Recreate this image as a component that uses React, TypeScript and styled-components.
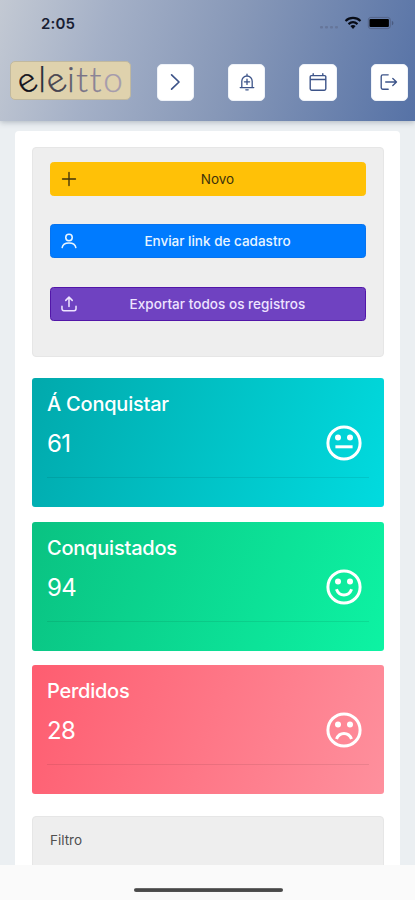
import React from "react";
import styled, { createGlobalStyle } from "styled-components";

const Global = createGlobalStyle`
  * { box-sizing: border-box; }
  body { margin: 0; font-family: Inter, "Liberation Sans", sans-serif; }
`;
const Screen = styled.div`
  width: 415px; height: 900px; overflow: hidden;
  display: flex; flex-direction: column; background: #ebeff2;
`;
const Header = styled.header`
  flex: none; height: 121px; display: flex; flex-direction: column; z-index: 1;
  background: linear-gradient(106deg, #c3c9d3 0%, #a4b0c7 25%, #8798b8 55%, #5672a6 100%);
  box-shadow: 0 1px 6px rgba(50, 65, 90, 0.35);
`;
const StatusBar = styled.div`
  height: 47px; display: flex; align-items: center; justify-content: space-between;
  padding: 0 19px 0 41px;
`;
const Clock = styled.span`
  font-size: 15px; font-weight: 600; color: #182033; letter-spacing: 0.2px;
`;
const StatusIcons = styled.div` display: flex; align-items: center; `;
const Toolbar = styled.nav`
  display: flex; align-items: center; justify-content: space-between;
  height: 70px; padding: 0 7px 0 10px;
`;
const Logo = styled.div`
  width: 121px; height: 39px; margin-top: -3px; border-radius: 5px; background: #dfd2ad;
  border: 1px solid #c1b99f; display: flex; align-items: center; justify-content: center;
  font-family: Lato, sans-serif; font-weight: 300; font-size: 35px; line-height: 36px;
`;
const Letter = styled.span<{ $tone: string; $tilt?: boolean; $w: number }>`
  display: inline-flex; justify-content: center; width: ${(p) => p.$w}px; color: ${(p) => p.$tone};
  padding-bottom: 5px;
  -webkit-text-stroke: ${(p) => (p.$tilt ? 0.5 : 0.25)}px ${(p) => p.$tone};
  transform: ${(p) => (p.$tilt ? "rotate(-32deg)" : "none")};
  transform-origin: 50% 58%;
`;
const Actions = styled.div` display: flex; gap: 34px; `;
const IconButton = styled.button`
  width: 37.3px; height: 37px; border: 1px solid #eef2f8; border-radius: 5px; background: #fff;
  display: flex; align-items: center; justify-content: center; padding: 0; color: #3d5489;
`;
const Main = styled.main`
  flex: 1; min-height: 0; overflow: hidden; padding: 10px 15px 0;
`;
const Card = styled.section`
  height: 760px; background: #fff; border-radius: 4px; padding: 16px 16px 0 17px;
  display: flex; flex-direction: column;
`;
const Panel = styled.div<{ $h: number }>`
  flex: none; height: ${(p) => p.$h}px; background: #eee; border: 1px solid #e6e6e6;
  border-radius: 4px; padding: 14px 17px 0 17px; display: flex; flex-direction: column; gap: 28.4px;
`;
const Action = styled.button<{ $bg: string; $edge: string; $fg: string; $weight: number }>`
  flex: none; height: 34px; width: 100%; border-radius: 3.5px; border: 1px solid ${(p) => p.$edge};
  background: ${(p) => p.$bg}; color: ${(p) => p.$fg}; padding: 0 8px 0 9px;
  display: flex; align-items: center; font: ${(p) => p.$weight} 13.5px Inter, sans-serif;
`;
const ActionLabel = styled.span<{ $spacing: number }>`
  flex: 1; text-align: center; white-space: nowrap; letter-spacing: ${(p) => p.$spacing}px;
`;
const Stats = styled.div`
  display: flex; flex-direction: column; gap: 14.6px; margin: 21px 0 22px;
`;
const Stat = styled.article<{ $from: string; $to: string }>`
  height: 129px; border-radius: 3px; padding: 14px 15px 0; color: #fff;
  background: linear-gradient(110deg, ${(p) => p.$from}, ${(p) => p.$to});
`;
const StatTitle = styled.h2<{ $spacing: number }>`
  margin: 0; font-size: 20px; line-height: 25px; font-weight: 500;
  letter-spacing: ${(p) => p.$spacing}px; white-space: nowrap;
`;
const StatRow = styled.div`
  height: 61px; padding: 5px 7px 7px 0; display: flex; align-items: flex-start; justify-content: space-between;
  border-bottom: 1px solid rgba(0, 0, 0, 0.08);
`;
const Count = styled.span` font-size: 24px; line-height: 44px; letter-spacing: -0.6px; `;
const Face = styled.svg` display: block; margin-top: 3px; `;
const FilterTitle = styled.span`
  font-size: 13.5px; line-height: 17px; color: #505050; margin-top: 1px; letter-spacing: 0;
`;
const BottomBar = styled.footer`
  flex: none; height: 35px; background: #fafafa; display: flex; justify-content: center; padding-top: 23px;
`;
const HomeIndicator = styled.div`
  width: 149px; height: 4px; border-radius: 2px; margin-left: 1px;
  background: linear-gradient(#777, #444 40%, #555);
`;

const letters = [
  { c: "e", tone: "#0d0d18", tilt: true, w: 20 },
  { c: "l", tone: "#292938", w: 9 },
  { c: "e", tone: "#45424f", tilt: true, w: 20 },
  { c: "i", tone: "#5c5a6d", w: 9 },
  { c: "t", tone: "#787387", w: 13 },
  { c: "t", tone: "#8b8496", w: 14 },
  { c: "o", tone: "#a69cac", w: 21 },
];

type GlyphProps = { size?: number; sw?: number; children: React.ReactNode };
const Glyph = ({ size = 20, sw = 1.6, children }: GlyphProps) => (
  <svg width={size} height={size} viewBox="0 0 20 20" fill="none" stroke="currentColor"
    strokeWidth={sw} strokeLinecap="round" strokeLinejoin="round">{children}</svg>
);

const mouths = {
  neutral: "M9.4 21.8h17.2",
  happy: "M10.4 20.2c1.5 3.8 4.3 5.8 7.6 5.8s6.1-2 7.6-5.8",
  sad: "M10.5 27c1.5-3.7 4.3-5.5 7.5-5.5s6 1.8 7.5 5.5",
};
type Mood = keyof typeof mouths;

const stats: { title: string; count: number; mood: Mood; from: string; to: string; spacing: number }[] = [
  { title: "Á Conquistar", count: 61, mood: "neutral", from: "#01a9ac", to: "#01dbdf", spacing: -0.22 },
  { title: "Conquistados", count: 94, mood: "happy", from: "#0ac282", to: "#0df3a3", spacing: -0.22 },
  { title: "Perdidos", count: 28, mood: "sad", from: "#fe5d70", to: "#fe909d", spacing: -0.25 },
];

export default function App() {
  return (
    <Screen>
      <Global />
      <Header>
        <StatusBar>
          <Clock>2:05</Clock>
          <StatusIcons>
            <svg width="76" height="16" viewBox="0 0 76 16">
              <g fill="#66769a">
                <rect x="0" y="10" width="3" height="2.5" rx="1" /><rect x="5" y="10" width="3" height="2.5" rx="1" />
                <rect x="10" y="10" width="3" height="2.5" rx="1" /><rect x="15" y="10" width="3" height="2.5" rx="1" />
              </g>
              <g transform="translate(-.5 -.8)">
                <g fill="none" stroke="#080c16" strokeWidth="2.1">
                  <path d="M26 5.7c4.3-4 10.7-4 15 0" /><path d="M29 8.9c2.7-2.4 6.3-2.4 9 0" />
                </g>
                <path d="M30.9 10.8c1.6-1.2 3.6-1.2 5.2 0l-2.6 2.9z" fill="#080c16" />
                <rect x="48.8" y="2.2" width="22" height="11.2" rx="2.5" fill="none" stroke="#55658a" strokeWidth="1" />
                <rect x="50" y="3.8" width="19.4" height="8" rx="1" fill="#000" />
                <path d="M72.4 5.8c2 .5 2 3.8 0 4.3z" fill="#4b5b80" />
              </g>
            </svg>
          </StatusIcons>
        </StatusBar>
        <Toolbar>
          <Logo>
            {letters.map((l, i) => <Letter key={i} $tone={l.tone} $tilt={l.tilt} $w={l.w}>{l.c}</Letter>)}
          </Logo>
          <Actions>
            <IconButton aria-label="Avançar"><Glyph sw={1.7}><path d="M6.6 2.8 14 10l-7.4 7.2" /></Glyph></IconButton>
            <IconButton aria-label="Notificações">
              <Glyph sw={1.3}>
                <path d="M3.2 15.6h13.6M4.8 15.4V9.2a5.2 5.2 0 0 1 10.4 0v6.2M10 3.8V2.2M8.8 17.8h2.4M10 7.2v5.2M7.4 9.8h5.2" />
              </Glyph>
            </IconButton>
            <IconButton aria-label="Agenda">
              <Glyph sw={1.4}><path d="M3.4 3.6h13.2a1.2 1.2 0 0 1 1.2 1.2v12a1.4 1.4 0 0 1-1.4 1.4H3.6a1.4 1.4 0 0 1-1.4-1.4v-12a1.2 1.2 0 0 1 1.2-1.2ZM2.2 7.5h15.6M5.2 1.7v1.9M14.8 1.7v1.9" /></Glyph>
            </IconButton>
            <IconButton aria-label="Sair">
              <Glyph sw={1.35}><path d="M9.2 2.8H3.8a1.6 1.6 0 0 0-1.6 1.6v11.2a1.6 1.6 0 0 0 1.6 1.6h5.4M6.7 10h10.8M13.8 6.4l3.7 3.6-3.7 3.6" /></Glyph>
            </IconButton>
          </Actions>
        </Toolbar>
      </Header>
      <Main>
        <Card>
          <Panel $h={210}>
            <Action $bg="#ffc107" $edge="#ffc107" $fg="#40330b" $weight={400}>
              <Glyph size={18} sw={1.5}><path d="M10 2.8v14.4M2.8 10h14.4" /></Glyph>
              <ActionLabel $spacing={0}>Novo</ActionLabel>
            </Action>
            <Action $bg="#007bff" $edge="#0773ef" $fg="#e9f5ff" $weight={500}>
              <Glyph size={18} sw={1.7}><circle cx="10" cy="6" r="3.6" /><path d="M2.4 17.3c.6-3.6 3-5 7.6-5s7 1.4 7.6 5" /></Glyph>
              <ActionLabel $spacing={0}>Enviar link de cadastro</ActionLabel>
            </Action>
            <Action $bg="#6f42c1" $edge="#5216a8" $fg="#eee4ff" $weight={500}>
              <Glyph size={18} sw={1.7}><path d="M10 12.7V2.5M6.4 6 10 2.4 13.6 6M2.2 12.5v2.9a2 2 0 0 0 2 2h11.6a2 2 0 0 0 2-2v-2.9" /></Glyph>
              <ActionLabel $spacing={0.04}>Exportar todos os registros</ActionLabel>
            </Action>
          </Panel>
          <Stats>
            {stats.map((s) => (
              <Stat key={s.title} $from={s.from} $to={s.to}>
                <StatTitle $spacing={s.spacing}>{s.title}</StatTitle>
                <StatRow>
                  <Count>{s.count}</Count>
                  <Face width="36" height="36" viewBox="0 0 36 36">
                    <circle cx="18" cy="18" r="16.1" fill="none" stroke="#fff" strokeWidth="3" />
                    <circle cx="12" cy="12.5" r="3" fill="#fff" /><circle cx="24" cy="12.5" r="3" fill="#fff" />
                    <path d={mouths[s.mood]} fill="none" stroke="#fff" strokeWidth="3" />
                  </Face>
                </StatRow>
              </Stat>
            ))}
          </Stats>
          <Panel $h={80}><FilterTitle>Filtro</FilterTitle></Panel>
        </Card>
      </Main>
      <BottomBar><HomeIndicator /></BottomBar>
    </Screen>
  );
}
